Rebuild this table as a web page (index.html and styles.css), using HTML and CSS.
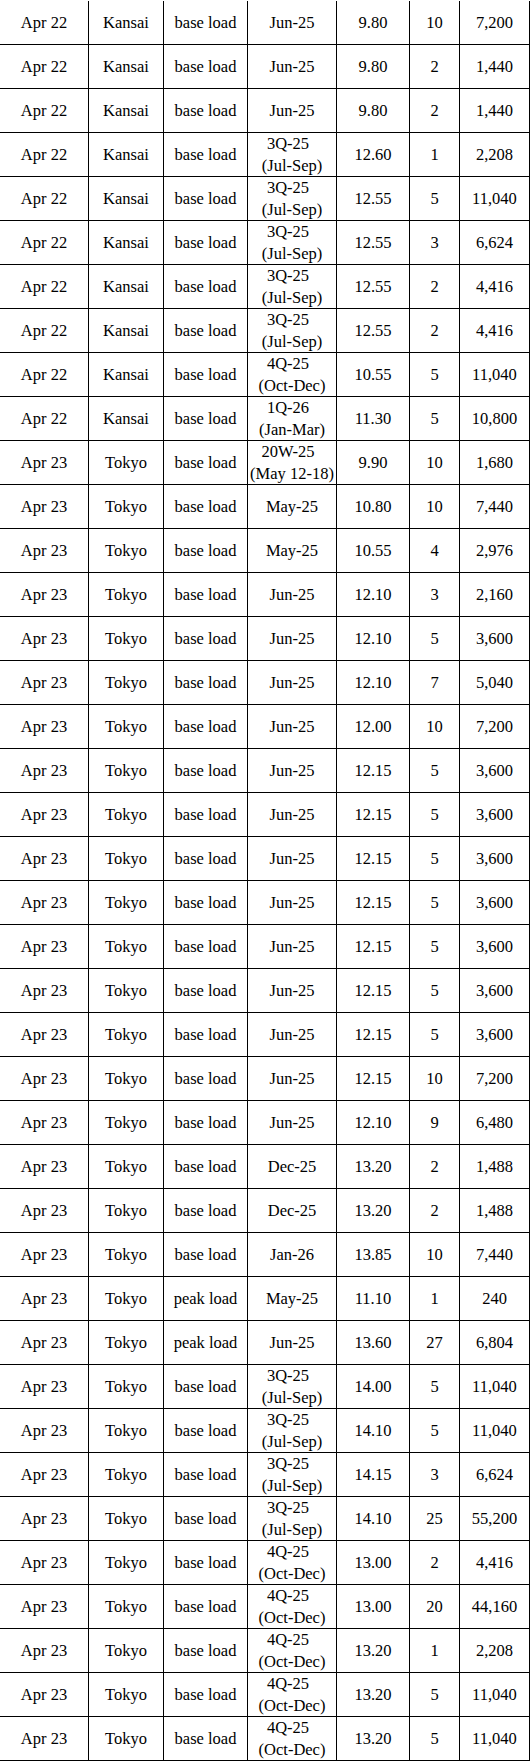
FILE: index.html
```html
<!DOCTYPE html>
<html lang="en">
<head>
<meta charset="utf-8">
<title>Trades</title>
<link rel="stylesheet" href="styles.css">
</head>
<body>
<table class="trades">
<colgroup>
<col class="c-date"><col class="c-area"><col class="c-load"><col class="c-period"><col class="c-price"><col class="c-qty"><col class="c-vol">
</colgroup>
<tbody>
<tr><td>Apr 22</td><td>Kansai</td><td>base load</td><td>Jun-25</td><td>9.80</td><td>10</td><td>7,200</td></tr>
<tr><td>Apr 22</td><td>Kansai</td><td>base load</td><td>Jun-25</td><td>9.80</td><td>2</td><td>1,440</td></tr>
<tr><td>Apr 22</td><td>Kansai</td><td>base load</td><td>Jun-25</td><td>9.80</td><td>2</td><td>1,440</td></tr>
<tr><td>Apr 22</td><td>Kansai</td><td>base load</td><td><span class="l1">3Q-25</span><br>(Jul-Sep)</td><td>12.60</td><td>1</td><td>2,208</td></tr>
<tr><td>Apr 22</td><td>Kansai</td><td>base load</td><td><span class="l1">3Q-25</span><br>(Jul-Sep)</td><td>12.55</td><td>5</td><td>11,040</td></tr>
<tr><td>Apr 22</td><td>Kansai</td><td>base load</td><td><span class="l1">3Q-25</span><br>(Jul-Sep)</td><td>12.55</td><td>3</td><td>6,624</td></tr>
<tr><td>Apr 22</td><td>Kansai</td><td>base load</td><td><span class="l1">3Q-25</span><br>(Jul-Sep)</td><td>12.55</td><td>2</td><td>4,416</td></tr>
<tr><td>Apr 22</td><td>Kansai</td><td>base load</td><td><span class="l1">3Q-25</span><br>(Jul-Sep)</td><td>12.55</td><td>2</td><td>4,416</td></tr>
<tr><td>Apr 22</td><td>Kansai</td><td>base load</td><td><span class="l1">4Q-25</span><br>(Oct-Dec)</td><td>10.55</td><td>5</td><td>11,040</td></tr>
<tr><td>Apr 22</td><td>Kansai</td><td>base load</td><td><span class="l1">1Q-26</span><br>(Jan-Mar)</td><td>11.30</td><td>5</td><td>10,800</td></tr>
<tr><td>Apr 23</td><td>Tokyo</td><td>base load</td><td><span class="l1">20W-25</span><br>(May 12-18)</td><td>9.90</td><td>10</td><td>1,680</td></tr>
<tr><td>Apr 23</td><td>Tokyo</td><td>base load</td><td>May-25</td><td>10.80</td><td>10</td><td>7,440</td></tr>
<tr><td>Apr 23</td><td>Tokyo</td><td>base load</td><td>May-25</td><td>10.55</td><td>4</td><td>2,976</td></tr>
<tr><td>Apr 23</td><td>Tokyo</td><td>base load</td><td>Jun-25</td><td>12.10</td><td>3</td><td>2,160</td></tr>
<tr><td>Apr 23</td><td>Tokyo</td><td>base load</td><td>Jun-25</td><td>12.10</td><td>5</td><td>3,600</td></tr>
<tr><td>Apr 23</td><td>Tokyo</td><td>base load</td><td>Jun-25</td><td>12.10</td><td>7</td><td>5,040</td></tr>
<tr><td>Apr 23</td><td>Tokyo</td><td>base load</td><td>Jun-25</td><td>12.00</td><td>10</td><td>7,200</td></tr>
<tr><td>Apr 23</td><td>Tokyo</td><td>base load</td><td>Jun-25</td><td>12.15</td><td>5</td><td>3,600</td></tr>
<tr><td>Apr 23</td><td>Tokyo</td><td>base load</td><td>Jun-25</td><td>12.15</td><td>5</td><td>3,600</td></tr>
<tr><td>Apr 23</td><td>Tokyo</td><td>base load</td><td>Jun-25</td><td>12.15</td><td>5</td><td>3,600</td></tr>
<tr><td>Apr 23</td><td>Tokyo</td><td>base load</td><td>Jun-25</td><td>12.15</td><td>5</td><td>3,600</td></tr>
<tr><td>Apr 23</td><td>Tokyo</td><td>base load</td><td>Jun-25</td><td>12.15</td><td>5</td><td>3,600</td></tr>
<tr><td>Apr 23</td><td>Tokyo</td><td>base load</td><td>Jun-25</td><td>12.15</td><td>5</td><td>3,600</td></tr>
<tr><td>Apr 23</td><td>Tokyo</td><td>base load</td><td>Jun-25</td><td>12.15</td><td>5</td><td>3,600</td></tr>
<tr><td>Apr 23</td><td>Tokyo</td><td>base load</td><td>Jun-25</td><td>12.15</td><td>10</td><td>7,200</td></tr>
<tr><td>Apr 23</td><td>Tokyo</td><td>base load</td><td>Jun-25</td><td>12.10</td><td>9</td><td>6,480</td></tr>
<tr><td>Apr 23</td><td>Tokyo</td><td>base load</td><td>Dec-25</td><td>13.20</td><td>2</td><td>1,488</td></tr>
<tr><td>Apr 23</td><td>Tokyo</td><td>base load</td><td>Dec-25</td><td>13.20</td><td>2</td><td>1,488</td></tr>
<tr><td>Apr 23</td><td>Tokyo</td><td>base load</td><td>Jan-26</td><td>13.85</td><td>10</td><td>7,440</td></tr>
<tr><td>Apr 23</td><td>Tokyo</td><td>peak load</td><td>May-25</td><td>11.10</td><td>1</td><td>240</td></tr>
<tr><td>Apr 23</td><td>Tokyo</td><td>peak load</td><td>Jun-25</td><td>13.60</td><td>27</td><td>6,804</td></tr>
<tr><td>Apr 23</td><td>Tokyo</td><td>base load</td><td><span class="l1">3Q-25</span><br>(Jul-Sep)</td><td>14.00</td><td>5</td><td>11,040</td></tr>
<tr><td>Apr 23</td><td>Tokyo</td><td>base load</td><td><span class="l1">3Q-25</span><br>(Jul-Sep)</td><td>14.10</td><td>5</td><td>11,040</td></tr>
<tr><td>Apr 23</td><td>Tokyo</td><td>base load</td><td><span class="l1">3Q-25</span><br>(Jul-Sep)</td><td>14.15</td><td>3</td><td>6,624</td></tr>
<tr><td>Apr 23</td><td>Tokyo</td><td>base load</td><td><span class="l1">3Q-25</span><br>(Jul-Sep)</td><td>14.10</td><td>25</td><td>55,200</td></tr>
<tr><td>Apr 23</td><td>Tokyo</td><td>base load</td><td><span class="l1">4Q-25</span><br>(Oct-Dec)</td><td>13.00</td><td>2</td><td>4,416</td></tr>
<tr><td>Apr 23</td><td>Tokyo</td><td>base load</td><td><span class="l1">4Q-25</span><br>(Oct-Dec)</td><td>13.00</td><td>20</td><td>44,160</td></tr>
<tr><td>Apr 23</td><td>Tokyo</td><td>base load</td><td><span class="l1">4Q-25</span><br>(Oct-Dec)</td><td>13.20</td><td>1</td><td>2,208</td></tr>
<tr><td>Apr 23</td><td>Tokyo</td><td>base load</td><td><span class="l1">4Q-25</span><br>(Oct-Dec)</td><td>13.20</td><td>5</td><td>11,040</td></tr>
<tr><td>Apr 23</td><td>Tokyo</td><td>base load</td><td><span class="l1">4Q-25</span><br>(Oct-Dec)</td><td>13.20</td><td>5</td><td>11,040</td></tr>
</tbody>
</table>
</body>
</html>
```
FILE: styles.css
```css
html, body {
  margin: 0;
  padding: 0;
  background: #ffffff;
}

.trades {
  border-collapse: separate;
  border-spacing: 0;
  table-layout: fixed;
  width: 530px;
  margin-top: 1px;
  font-family: "Liberation Serif", "Times New Roman", serif;
  font-size: 16.5px;
  color: #000000;
}

.trades tr {
  height: 44px;
}

.trades td {
  border-right: 1px solid #000000;
  border-bottom: 1px solid #000000;
  padding: 0;
  text-align: center;
  vertical-align: middle;
  line-height: 21.5px;
  white-space: nowrap;
}

.c-date { width: 89px; }
.c-area { width: 75px; }
.c-load { width: 84px; }
.c-period { width: 89px; }
.c-price { width: 73px; }
.c-qty { width: 50px; }
.c-vol { width: 70px; }

.l1 {
  padding-right: 8px;
}
```
